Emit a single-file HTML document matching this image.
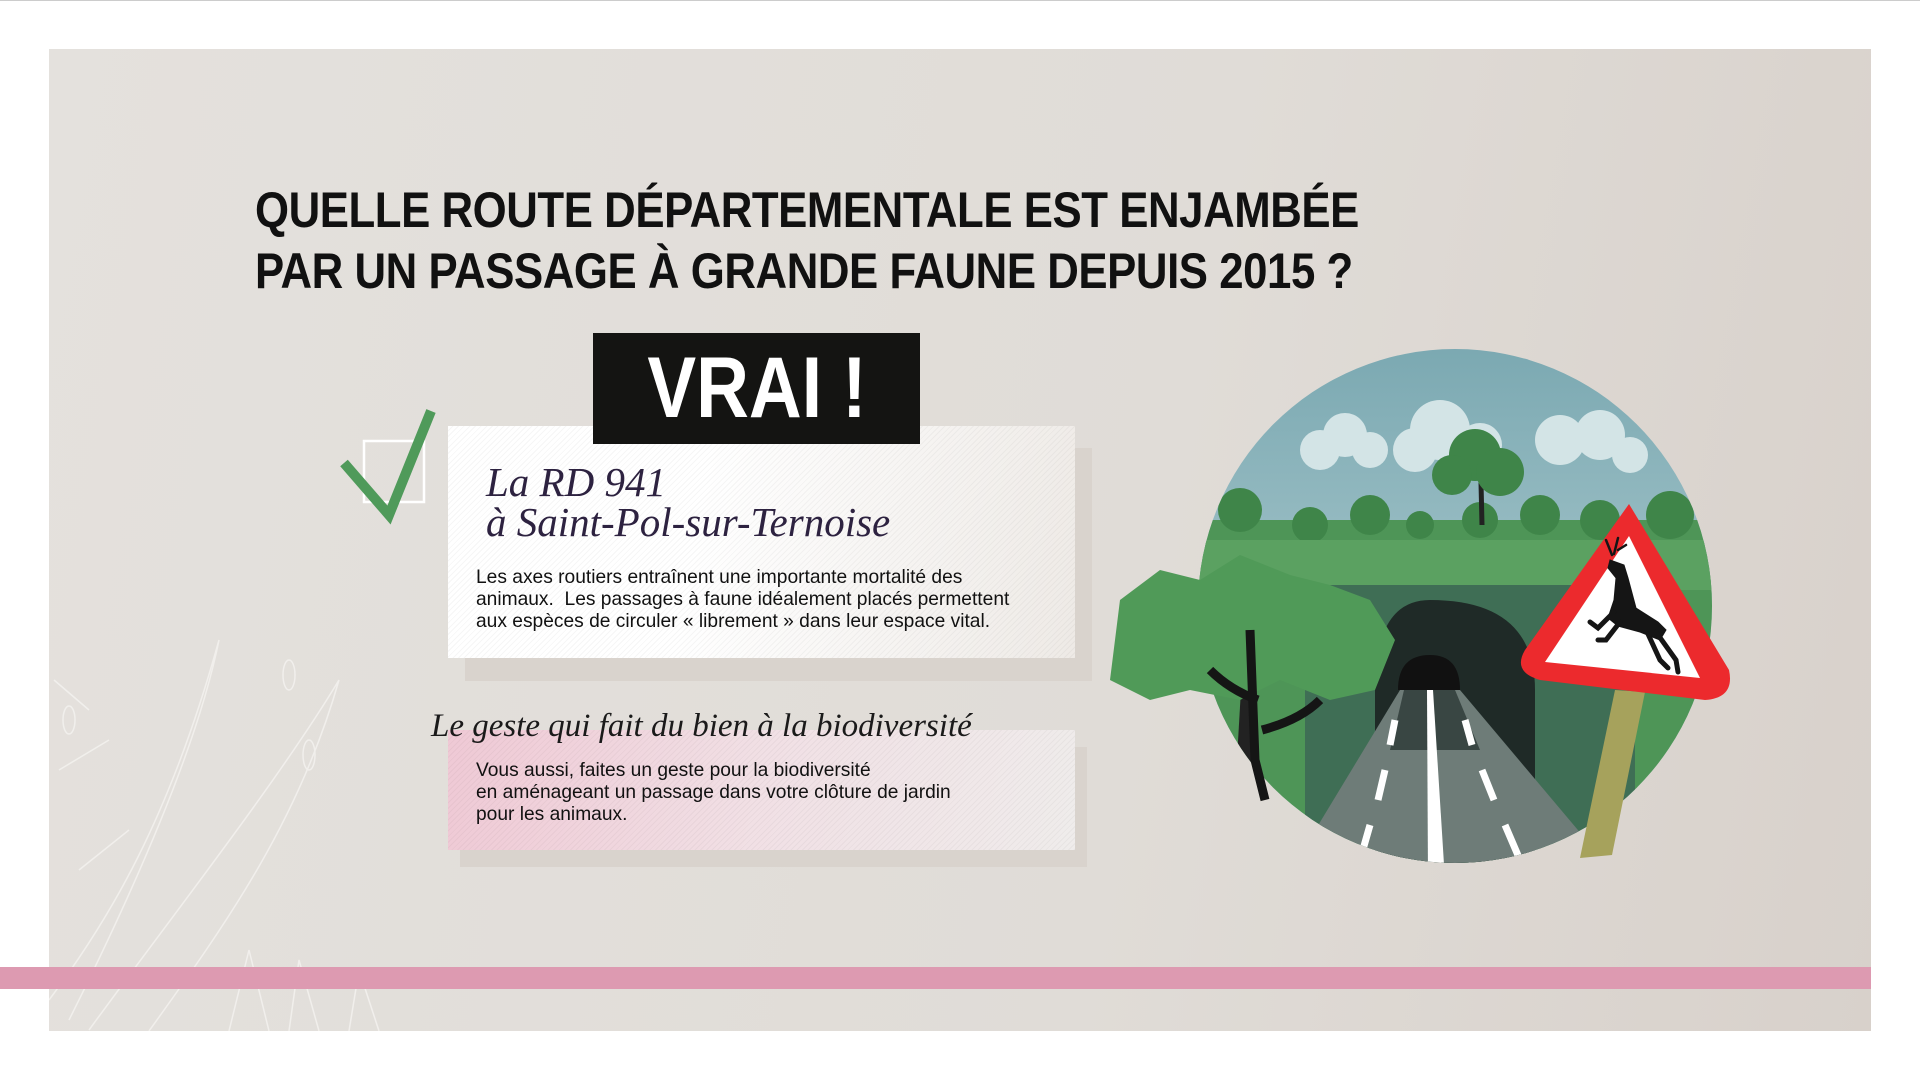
<!DOCTYPE html>
<html><head><meta charset="utf-8"><style>
body{margin:0;width:1920px;height:1080px;background:#fff;position:relative;overflow:hidden;font-family:"Liberation Sans",sans-serif}
.panel{position:absolute;left:49px;top:49px;width:1822px;height:982px;background:linear-gradient(100deg,#e4e1dd 0%,#e0dcd7 60%,#d8d1cb 100%)}
.title{position:absolute;left:255px;top:180px;font-weight:bold;font-size:50px;line-height:61px;color:#111;transform:scaleX(.875);transform-origin:0 0;white-space:nowrap;letter-spacing:-.5px}
.vrai{position:absolute;left:593px;top:333px;width:327px;height:111px;background:#141412;color:#fff;font-weight:bold;font-size:86px;line-height:111px;text-align:center}
.vrai span{display:inline-block;transform:scaleX(.85)}
.sh{position:absolute;background:#d9d3cd}
.card{position:absolute;background:repeating-linear-gradient(135deg,rgba(0,0,0,0) 0 3px,rgba(0,0,0,.035) 3px 4px),linear-gradient(100deg,#fff 40%,#eeeae6 100%)}
.card2{background:repeating-linear-gradient(135deg,rgba(0,0,0,0) 0 3px,rgba(0,0,0,.035) 3px 4px),linear-gradient(100deg,#efc9d5 0%,#f1e0e5 50%,#efeceb 100%)}
.script{position:absolute;font-family:"Liberation Serif",serif;font-style:italic;color:#2d2240;white-space:nowrap}
.body{position:absolute;font-size:19.2px;line-height:22px;color:#111;white-space:nowrap}
.bar{position:absolute;left:0;top:967px;width:1871px;height:22px;background:#dd9ab1}
</style></head><body>
<div style="position:absolute;left:0;top:0;width:1920px;height:1px;background:#ccc"></div>
<div class="panel"></div>
<svg style="position:absolute;left:49px;top:620px" width="460" height="411" viewBox="0 0 460 411" fill="none" stroke="#f3f1ee" stroke-width="1.5" opacity=".9">
<path d="M0 380 C60 300 120 200 170 20 M170 20 C150 120 90 260 20 400 M40 410 C120 300 230 160 290 60 M290 60 C250 200 180 300 100 411 M5 60 L40 90 M10 150 L60 120 M30 250 L80 210"/>
<ellipse cx="240" cy="55" rx="6" ry="15"/><ellipse cx="260" cy="135" rx="6" ry="15"/><ellipse cx="20" cy="100" rx="6" ry="14"/>
<path d="M180 411 L200 330 L220 411 M240 411 L250 340 L270 411 M300 411 L310 350 L330 411"/>
</svg>
<div class="bar"></div>
<div class="title">QUELLE ROUTE DÉPARTEMENTALE EST ENJAMBÉE<br>PAR UN PASSAGE À GRANDE FAUNE DEPUIS 2015 ?</div>
<div class="sh" style="left:465px;top:448px;width:627px;height:233px"></div>
<div class="card" style="left:448px;top:426px;width:627px;height:232px"></div>
<div class="vrai"><span>VRAI !</span></div>
<svg style="position:absolute;left:335px;top:405px" width="110" height="125">
<rect x="29" y="36" width="60" height="61" fill="none" stroke="#fff" stroke-width="2.5"/>
<path d="M9 58 L54 110 L96 6" fill="none" stroke="#4f9a5a" stroke-width="10"/>
</svg>
<div class="script" style="left:486px;top:462px;font-size:41px;line-height:40px">La RD 941<br>à Saint-Pol-sur-Ternoise</div>
<div class="body" style="left:476px;top:567px">Les axes routiers entraînent une importante mortalité des<br>animaux.&nbsp; Les passages à faune idéalement placés permettent<br>aux espèces de circuler « librement » dans leur espace vital.</div>
<div class="sh" style="left:460px;top:747px;width:627px;height:120px"></div>
<div class="card card2" style="left:448px;top:730px;width:627px;height:120px"></div>
<div class="script" style="left:431px;top:708px;font-size:33px;color:#1a1a1a">Le geste qui fait du bien à la biodiversité</div>
<div class="body" style="left:476px;top:760px">Vous aussi, faites un geste pour la biodiversité<br>en aménageant un passage dans votre clôture de jardin<br>pour les animaux.</div>
<svg style="position:absolute;left:1100px;top:340px" width="640" height="540" viewBox="1100 340 640 540">
<defs><clipPath id="c"><circle cx="1455" cy="606" r="257"/></clipPath>
<linearGradient id="sky" x1="0" y1="0" x2="0" y2="1"><stop offset="0" stop-color="#7aa8b1"/><stop offset="1" stop-color="#c5dbde"/></linearGradient></defs>
<g clip-path="url(#c)">
<rect x="1190" y="340" width="540" height="540" fill="url(#sky)"/>
<g fill="#d3e4e6"><circle cx="1320" cy="450" r="20"/><circle cx="1345" cy="435" r="22"/><circle cx="1370" cy="450" r="18"/><circle cx="1415" cy="450" r="22"/><circle cx="1440" cy="430" r="30"/><circle cx="1480" cy="445" r="22"/><circle cx="1560" cy="440" r="25"/><circle cx="1600" cy="435" r="25"/><circle cx="1630" cy="455" r="18"/></g>
<rect x="1190" y="520" width="540" height="360" fill="#4e9557"/>
<g fill="#3f8549"><circle cx="1240" cy="510" r="22"/><circle cx="1310" cy="525" r="18"/><circle cx="1370" cy="515" r="20"/><circle cx="1420" cy="525" r="14"/><circle cx="1480" cy="520" r="18"/><circle cx="1540" cy="515" r="20"/><circle cx="1600" cy="520" r="20"/><circle cx="1670" cy="515" r="24"/></g>
<rect x="1190" y="540" width="540" height="50" fill="#5ba161"/>
<rect x="1305" y="585" width="330" height="300" fill="#3f6e55"/>
<path d="M1375 880 L1375 690 Q1375 600 1430 600 Q1535 600 1535 690 L1535 880Z" fill="#1f2a27"/>
<path d="M1398 690 Q1398 655 1430 655 Q1460 655 1460 690Z" fill="#111"/>
<path d="M1400 690 L1460 690 L1620 880 L1285 880Z" fill="#6e7c78"/>
<path d="M1404 690 L1455 690 L1480 750 L1390 750Z" fill="#2c3836" opacity=".8"/>
<path d="M1427 690 L1433 690 L1445 880 L1428 880Z" fill="#fff"/>
<path d="M1395 720 L1390 745 M1385 770 L1378 800 M1370 825 L1360 860 M1465 720 L1472 745 M1482 770 L1494 800 M1505 825 L1520 860" stroke="#fff" stroke-width="7"/>
<path d="M1480 440 L1482 525" stroke="#222" stroke-width="5"/>
<g fill="#3f8549"><circle cx="1475" cy="455" r="26"/><circle cx="1500" cy="472" r="24"/><circle cx="1452" cy="475" r="20"/></g>
<path d="M1230 880 L1245 620 L1260 880Z" fill="#222"/>
</g>
<g fill="#509a58"><path d="M1110 680 L1120 600 L1160 570 L1200 580 L1240 555 L1290 575 L1330 585 L1370 600 L1395 640 L1375 690 L1330 700 L1280 680 L1240 700 L1190 690 L1150 700Z"/></g>
<path d="M1250 630 L1255 760 L1265 800 M1258 700 Q1230 690 1210 670 M1262 730 Q1300 720 1320 700" stroke="#151515" stroke-width="9" fill="none"/>
<path d="M1615 690 L1645 692 L1612 855 L1580 858Z" fill="#a6a25c"/>
<path d="M1629 504 L1729 670 Q1735 698 1705 700 L1540 680 Q1512 672 1525 650Z" fill="#ec2a2d"/>
<path d="M1629 536 L1700 678 L1545 662Z" fill="#fff"/>
<g fill="#151515" stroke="#151515" stroke-linecap="round">
<path d="M1612 555 L1606 540 M1614 554 L1618 538 M1618 550 L1626 545" stroke-width="2.5" fill="none"/>
<path d="M1610 560 L1624 565 L1628 578 L1636 608 L1658 622 L1666 630 L1660 640 L1640 632 L1618 626 L1608 618 L1614 600 L1616 578 L1608 568Z"/>
<path d="M1614 612 L1598 628 L1590 622 M1620 622 L1606 640 L1598 640 M1656 632 L1676 660 L1678 672 M1648 634 L1660 660 L1668 668" stroke-width="5" fill="none"/>
</g>
</svg>
</body></html>
